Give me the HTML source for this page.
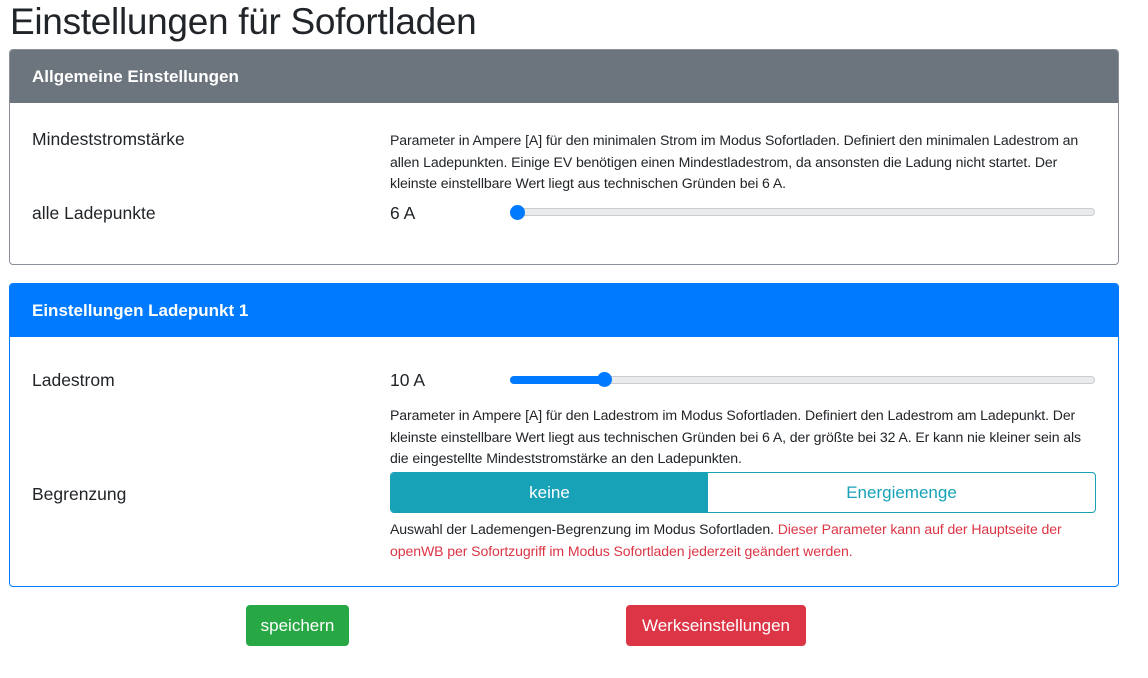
<!DOCTYPE html>
<html><head><meta charset="utf-8"><style>
*{box-sizing:border-box;margin:0;padding:0}
body{width:1148px;height:678px;background:#fff;font-family:"Liberation Sans",sans-serif;color:#212529;position:relative;overflow:hidden}
.a{position:absolute;white-space:nowrap}
h1{position:absolute;left:10px;top:1px;font-size:37px;font-weight:400;letter-spacing:-0.3px}
.card{position:absolute;left:9px;width:1110px;border:1px solid;border-radius:4px;overflow:hidden}
.hd{height:53px;color:#fff;font-weight:bold;font-size:17px;padding:17px 0 0 22px}
.lbl{font-size:17.5px}
.sm{font-size:14.1px;line-height:21.5px;letter-spacing:-0.1px}
.track{position:absolute;height:8px;border-radius:4px;background:#e9ecef;border:1px solid #ccc}
.th{position:absolute;width:15px;height:15px;border-radius:50%;background:#007bff}
.btn{position:absolute;color:#fff;font-size:17px;border-radius:4px;text-align:center;line-height:41px;height:41px}
</style></head><body>
<h1>Einstellungen für Sofortladen</h1>
<div class="card" style="top:49px;height:216px;border-color:#8a9097">
<div class="hd" style="background:#6c757d">Allgemeine Einstellungen</div>
</div>
<div class="a lbl" style="left:32px;top:129px">Mindeststromstärke</div>
<div class="a sm" style="left:390px;top:130px">Parameter in Ampere [A] für den minimalen Strom im Modus Sofortladen. Definiert den minimalen Ladestrom an<br>allen Ladepunkten. Einige EV benötigen einen Mindestladestrom, da ansonsten die Ladung nicht startet. Der<br>kleinste einstellbare Wert liegt aus technischen Gründen bei 6 A.</div>
<div class="a lbl" style="left:32px;top:203px">alle Ladepunkte</div>
<div class="a lbl" style="left:390px;top:203px">6 A</div>
<div class="track" style="left:510px;top:208px;width:585px"></div>
<div class="th" style="left:510px;top:205px"></div>

<div class="card" style="top:283px;height:304px;border-color:#007bff">
<div class="hd" style="background:#007bff">Einstellungen Ladepunkt 1</div>
</div>
<div class="a lbl" style="left:32px;top:370px">Ladestrom</div>
<div class="a lbl" style="left:390px;top:370px">10 A</div>
<div class="track" style="left:510px;top:376px;width:585px"></div>
<div style="position:absolute;left:510px;top:376px;width:96px;height:8px;border-radius:4px;background:#007bff"></div>
<div class="th" style="left:597px;top:372px"></div>
<div class="a sm" style="left:390px;top:405px">Parameter in Ampere [A] für den Ladestrom im Modus Sofortladen. Definiert den Ladestrom am Ladepunkt. Der<br>kleinste einstellbare Wert liegt aus technischen Gründen bei 6 A, der größte bei 32 A. Er kann nie kleiner sein als<br>die eingestellte Mindeststromstärke an den Ladepunkten.</div>
<div class="a lbl" style="left:32px;top:484px">Begrenzung</div>
<div style="position:absolute;left:390px;top:472px;width:706px;height:41px;border:1px solid #17a2b8;border-radius:4px;overflow:hidden">
<div style="position:absolute;left:0;top:0;width:317px;height:41px;background:#17a2b8;color:#fff;text-align:center;line-height:39px;font-size:17px">keine</div>
<div style="position:absolute;left:317px;top:0;width:387px;text-align:center;line-height:39px;font-size:17px;color:#17a2b8">Energiemenge</div>
</div>
<div class="a sm" style="left:390px;top:519px">Auswahl der Lademengen-Begrenzung im Modus Sofortladen. <span style="color:#dc3545">Dieser Parameter kann auf der Hauptseite der</span><br><span style="color:#dc3545">openWB per Sofortzugriff im Modus Sofortladen jederzeit geändert werden.</span></div>

<div class="btn" style="left:246px;top:605px;width:103px;background:#28a745">speichern</div>
<div class="btn" style="left:626px;top:605px;width:180px;background:#dc3545">Werkseinstellungen</div>
</body></html>
